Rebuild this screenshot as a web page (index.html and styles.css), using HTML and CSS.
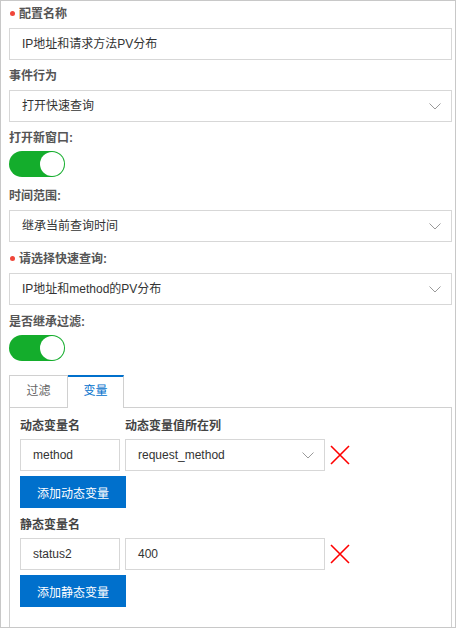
FILE: index.html
```html
<!DOCTYPE html>
<html lang="zh-CN">
<head>
  <meta charset="UTF-8" />
  <title>快速查询配置</title>
  <link rel="stylesheet" href="styles.css">
</head>
<body>
  <div class="panel">
    <div class="item">
      <div class="label required">配置名称</div>
      <div class="field">IP地址和请求方法PV分布</div>
    </div>

    <div class="item">
      <div class="label">事件行为</div>
      <div class="field select">
        <span>打开快速查询</span>
        <svg class="arrow" width="12" height="7" viewBox="0 0 12 7"><polyline points="0.5,0.5 6,6 11.5,0.5" fill="none" stroke="#9a9a9a" stroke-width="1"/></svg>
      </div>
    </div>

    <div class="item item-switch">
      <div class="label label-switch">打开新窗口:</div>
      <div class="switch on"></div>
    </div>

    <div class="item item-wide">
      <div class="label">时间范围:</div>
      <div class="field select">
        <span>继承当前查询时间</span>
        <svg class="arrow" width="12" height="7" viewBox="0 0 12 7"><polyline points="0.5,0.5 6,6 11.5,0.5" fill="none" stroke="#9a9a9a" stroke-width="1"/></svg>
      </div>
    </div>

    <div class="item item-wide">
      <div class="label required">请选择快速查询:</div>
      <div class="field select">
        <span>IP地址和method的PV分布</span>
        <svg class="arrow" width="12" height="7" viewBox="0 0 12 7"><polyline points="0.5,0.5 6,6 11.5,0.5" fill="none" stroke="#9a9a9a" stroke-width="1"/></svg>
      </div>
    </div>

    <div class="item item-last">
      <div class="label label-switch">是否继承过滤:</div>
      <div class="switch on"></div>
    </div>

    <div class="tabs">
      <div class="tab-bar">
        <div class="tab">过滤</div>
        <div class="tab active">变量</div>
      </div>
      <div class="tab-body">
        <div class="var-labels">
          <div class="col-name">动态变量名</div>
          <div class="col-value">动态变量值所在列</div>
        </div>
        <div class="var-row">
          <div class="field col-name">method</div>
          <div class="field select col-value">
            <span>request_method</span>
            <svg class="arrow" width="12" height="7" viewBox="0 0 12 7"><polyline points="0.5,0.5 6,6 11.5,0.5" fill="none" stroke="#9a9a9a" stroke-width="1"/></svg>
          </div>
          <svg class="remove" width="20" height="20" viewBox="0 0 20 20"><path d="M1 1 L19 19 M19 1 L1 19" stroke="#ff0000" stroke-width="1.6" fill="none"/></svg>
        </div>
        <button class="btn">添加动态变量</button>

        <div class="var-labels second">
          <div class="col-name">静态变量名</div>
        </div>
        <div class="var-row">
          <div class="field col-name">status2</div>
          <div class="field col-value">400</div>
          <svg class="remove" width="20" height="20" viewBox="0 0 20 20"><path d="M1 1 L19 19 M19 1 L1 19" stroke="#ff0000" stroke-width="1.6" fill="none"/></svg>
        </div>
        <button class="btn">添加静态变量</button>
      </div>
    </div>
  </div>
</body>
</html>
```

FILE: styles.css
```css
body {
  margin: 0;
  font-family: "Liberation Sans", "Noto Sans CJK SC", sans-serif;
  font-size: 12px;
  color: #333;
  background: #fff;
}

.panel {
  width: 456px;
  height: 628px;
  box-sizing: border-box;
  border: 1px solid #c8c8c8;
  padding: 3px 3px 0 8px;
  display: flex;
  flex-direction: column;
  overflow: hidden;
}

.item {
  margin-bottom: 6px;
}

.item-switch {
  margin-bottom: 9px;
}

.item-wide {
  margin-bottom: 7px;
}

.item-last {
  margin-bottom: 14px;
}

.label {
  height: 20px;
  line-height: 20px;
  margin-bottom: 4px;
  color: #555;
  font-weight: bold;
}

.label-switch {
  margin-bottom: 3px;
}

.required::before {
  content: "";
  display: inline-block;
  width: 5px;
  height: 5px;
  border-radius: 50%;
  background: #f0463a;
  margin: 0 4px 2px 1px;
  vertical-align: middle;
}

.field {
  height: 32px;
  box-sizing: border-box;
  border: 1px solid #d7d7d7;
  padding: 0 10px 0 12px;
  line-height: 30px;
  color: #333;
  background: #fff;
  white-space: nowrap;
}

.select {
  display: flex;
  justify-content: space-between;
  align-items: center;
}

.arrow {
  flex: none;
}

.switch {
  width: 56px;
  height: 26px;
  border-radius: 13px;
  background: #14ad2c;
  display: flex;
  justify-content: flex-end;
  align-items: center;
  padding: 0 1px;
  box-sizing: border-box;
}

.switch::after {
  content: "";
  width: 24px;
  height: 24px;
  border-radius: 50%;
  background: #fff;
}

.tabs {
  flex: 1;
  display: flex;
  flex-direction: column;
}

.tab-bar {
  display: flex;
  height: 32px;
  border-bottom: 1px solid #d0d0d0;
}

.tab {
  width: 59px;
  box-sizing: border-box;
  border: 1px solid #d0d0d0;
  border-bottom: none;
  text-align: center;
  line-height: 30px;
  color: #666;
  background: #fff;
}

.tab + .tab {
  border-left: none;
  width: 56px;
}

.tab.active {
  border-top: 2px solid #0070cc;
  line-height: 29px;
  height: 33px;
  color: #0070cc;
}

.tab-body {
  flex: 1;
  border-left: 1px solid #d0d0d0;
  border-right: 1px solid #d0d0d0;
  padding: 8px 10px 0 10px;
}

.var-labels {
  display: flex;
  gap: 5px;
  height: 20px;
  line-height: 20px;
  margin-bottom: 3px;
  color: #444;
  font-weight: bold;
}

.var-labels.second {
  margin-top: 7px;
}

.col-name {
  width: 100px;
  box-sizing: border-box;
}

.col-value {
  width: 200px;
  box-sizing: border-box;
}

.var-row {
  display: flex;
  align-items: center;
  gap: 5px;
}

.remove {
  flex: none;
}

.btn {
  display: block;
  margin-top: 5px;
  width: 106px;
  height: 32px;
  border: none;
  background: #0070cc;
  color: #fff;
  font-family: inherit;
  font-size: 12px;
  padding: 0;
  cursor: pointer;
}
```
